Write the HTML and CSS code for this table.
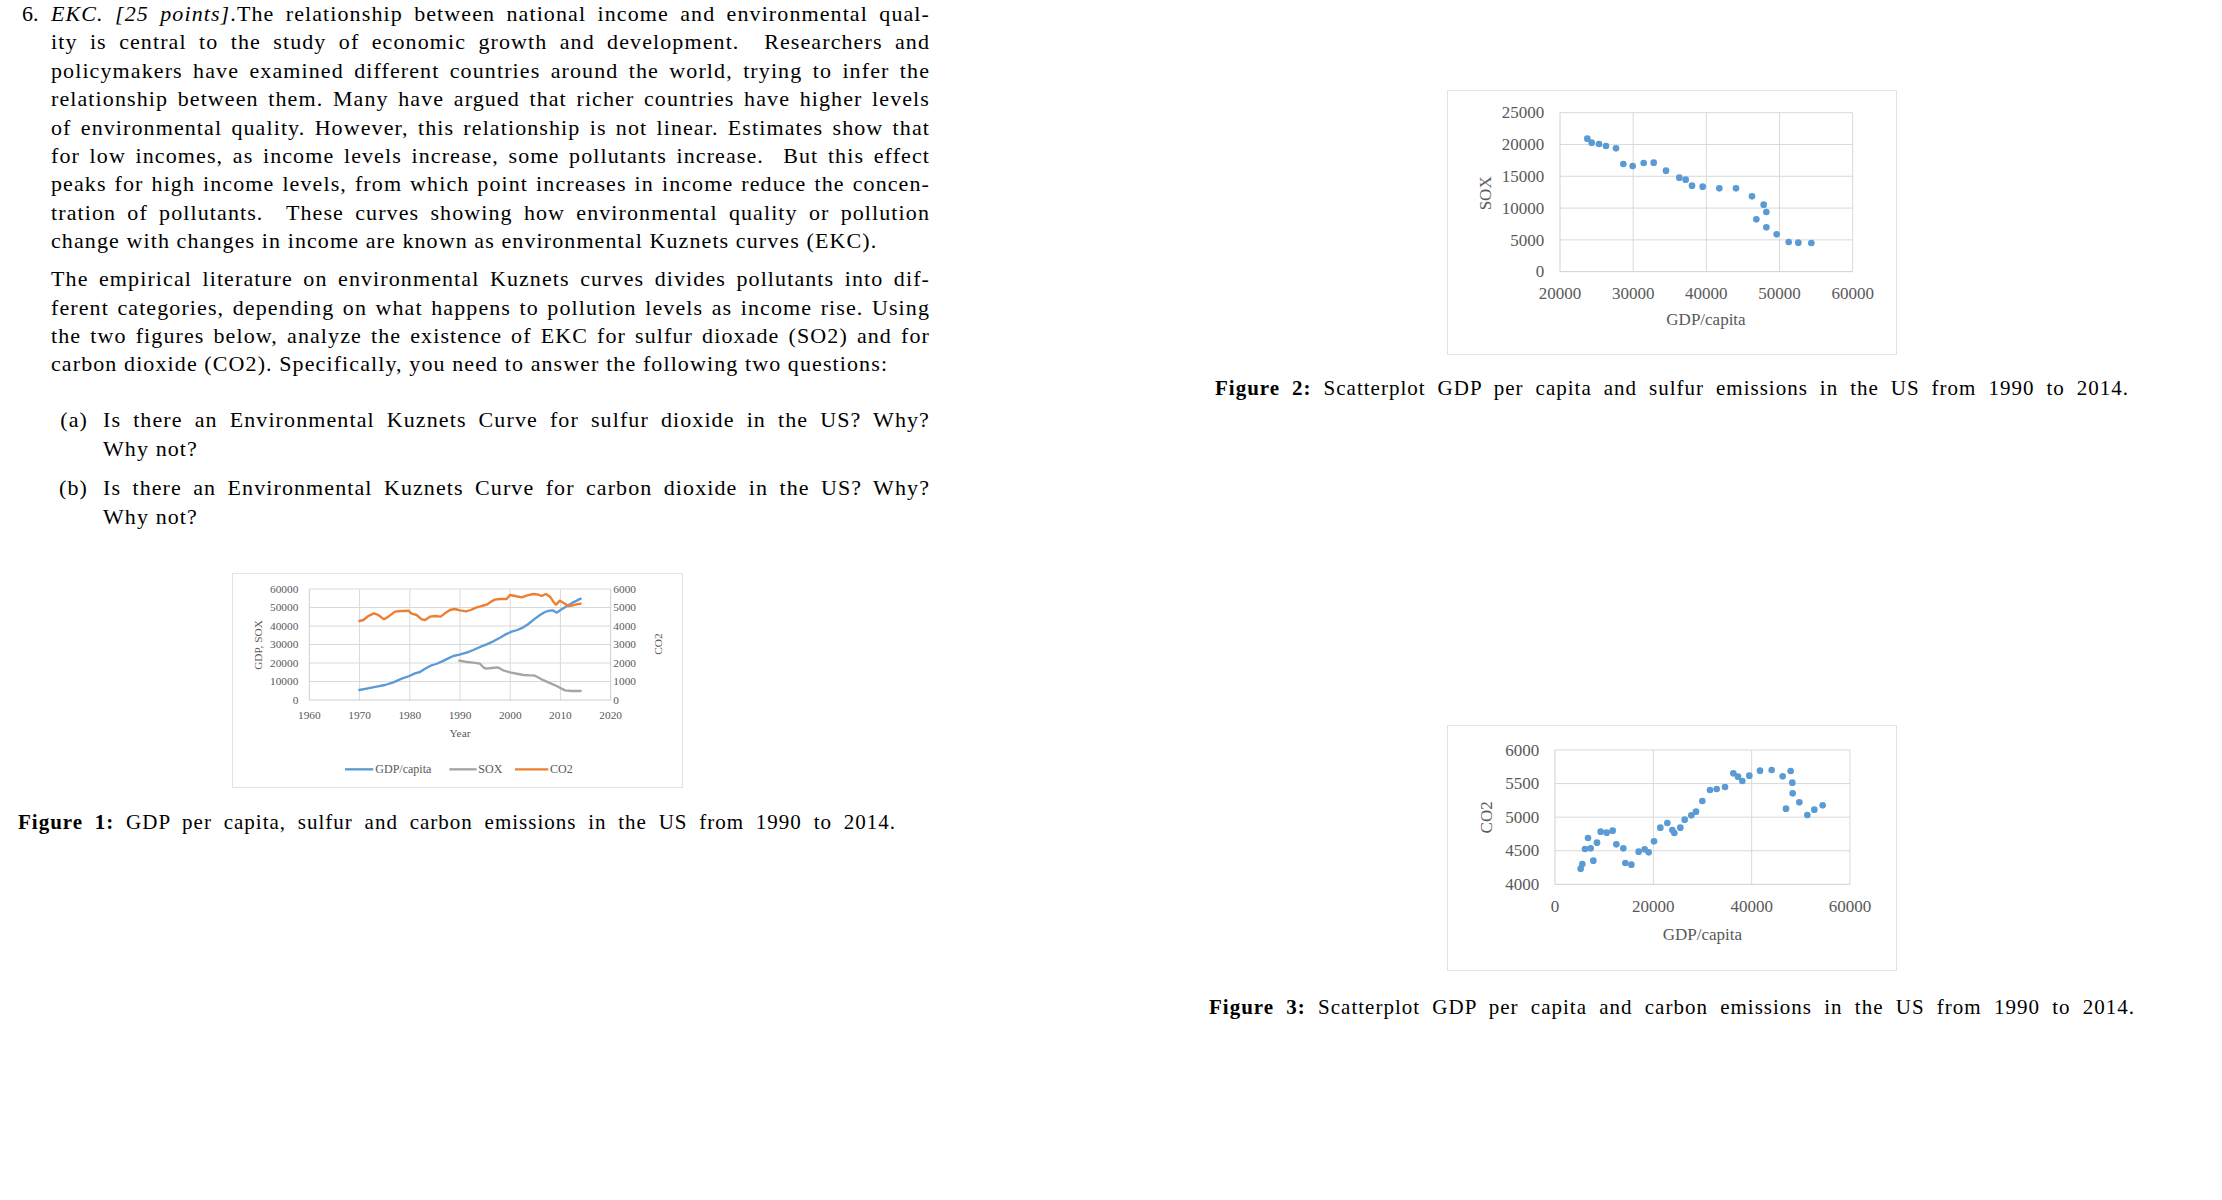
FILE: index.html
```html
<!DOCTYPE html>
<html lang="en">
<head>
<meta charset="utf-8">
<title>EKC question</title>
<link rel="stylesheet" href="styles.css">
</head>
<body>
<div class="page">
  <div class="left">
    <div class="question">
      <span class="qnum">6.</span>
      <div class="qbody">
        <p class="text para">
          <span class="ln"><i>EKC. [25 points]</i>.The relationship between national income and environmental qual-</span>
          <span class="ln">ity is central to the study of economic growth and development. &nbsp;Researchers and</span>
          <span class="ln">policymakers have examined different countries around the world, trying to infer the</span>
          <span class="ln">relationship between them. Many have argued that richer countries have higher levels</span>
          <span class="ln">of environmental quality. However, this relationship is not linear. Estimates show that</span>
          <span class="ln">for low incomes, as income levels increase, some pollutants increase. &nbsp;But this effect</span>
          <span class="ln">peaks for high income levels, from which point increases in income reduce the concen-</span>
          <span class="ln">tration of pollutants. &nbsp;These curves showing how environmental quality or pollution</span>
          <span class="ln last">change with changes in income are known as environmental Kuznets curves (EKC).</span>
        </p>
        <p class="text para para2">
          <span class="ln">The empirical literature on environmental Kuznets curves divides pollutants into dif-</span>
          <span class="ln">ferent categories, depending on what happens to pollution levels as income rise. Using</span>
          <span class="ln">the two figures below, analyze the existence of EKC for sulfur dioxade (SO2) and for</span>
          <span class="ln last">carbon dioxide (CO2). Specifically, you need to answer the following two questions:</span>
        </p>
        <ol class="items text">
          <li><span class="lbl">(a)</span><span class="itext"><span class="ln">Is there an Environmental Kuznets Curve for sulfur dioxide in the US? Why?</span><span class="ln last">Why not?</span></span></li>
          <li><span class="lbl">(b)</span><span class="itext"><span class="ln">Is there an Environmental Kuznets Curve for carbon dioxide in the US? Why?</span><span class="ln last">Why not?</span></span></li>
        </ol>
      </div>
    </div>

    <div class="chartbox fig1">
      <svg class="chart" width="449" height="213" viewBox="39 12 1347 639">
        <g class="grid">
          <line x1="268" y1="57" x2="1172" y2="57"/>
          <line x1="268" y1="112.5" x2="1172" y2="112.5"/>
          <line x1="268" y1="168" x2="1172" y2="168"/>
          <line x1="268" y1="223.5" x2="1172" y2="223.5"/>
          <line x1="268" y1="279" x2="1172" y2="279"/>
          <line x1="268" y1="334.5" x2="1172" y2="334.5"/>
          <line x1="418.7" y1="57" x2="418.7" y2="390"/>
          <line x1="569.3" y1="57" x2="569.3" y2="390"/>
          <line x1="720" y1="57" x2="720" y2="390"/>
          <line x1="870.7" y1="57" x2="870.7" y2="390"/>
          <line x1="1021.3" y1="57" x2="1021.3" y2="390"/>
        </g>
        <g class="axis">
          <line x1="268" y1="57" x2="268" y2="390"/>
          <line x1="1172" y1="57" x2="1172" y2="390"/>
          <line x1="268" y1="390" x2="1172" y2="390"/>
        </g>
        <g class="lbl1 end">
          <text x="235" y="68">60000</text>
          <text x="235" y="123.5">50000</text>
          <text x="235" y="179">40000</text>
          <text x="235" y="234.5">30000</text>
          <text x="235" y="290">20000</text>
          <text x="235" y="345.5">10000</text>
          <text x="235" y="401">0</text>
        </g>
        <g class="lbl1">
          <text x="1180" y="68">6000</text>
          <text x="1180" y="123.5">5000</text>
          <text x="1180" y="179">4000</text>
          <text x="1180" y="234.5">3000</text>
          <text x="1180" y="290">2000</text>
          <text x="1180" y="345.5">1000</text>
          <text x="1180" y="401">0</text>
        </g>
        <g class="lbl1 mid">
          <text x="268" y="448">1960</text>
          <text x="418.7" y="448">1970</text>
          <text x="569.3" y="448">1980</text>
          <text x="720" y="448">1990</text>
          <text x="870.7" y="448">2000</text>
          <text x="1021.3" y="448">2010</text>
          <text x="1172" y="448">2020</text>
          <text x="720" y="501">Year</text>
          <text x="125" y="225" transform="rotate(-90 125 225)">GDP, SOX</text>
          <text x="1327" y="222" transform="rotate(-90 1327 222)">CO2</text>
        </g>
        <polyline class="s-gdp" points="418,360 440,356 470,350 495,345 520,337 545,326 568,318 585,310 600,306 615,296 632,287 648,282 665,275 683,266 700,258 718,254 740,248 760,240 780,231 800,223 820,214 840,203 855,194 875,185 892,180 910,172 925,162 945,146 960,135 975,126 988,122 998,121 1010,128 1025,118 1045,106 1060,97 1082,86"/>
        <polyline class="s-sox" points="718,272 740,276 760,278 780,281 790,292 798,296 815,294 833,292 852,302 873,308 895,312 910,315 930,316 945,317 965,328 985,337 1010,348 1025,356 1035,361 1055,363 1082,363"/>
        <polyline class="s-co2" points="418,153 430,150 445,138 462,130 475,135 492,148 505,140 525,125 545,123 555,123 565,122 575,131 590,135 605,148 615,150 630,140 645,138 662,140 675,130 690,120 705,117 720,121 738,124 752,120 768,113 785,108 800,104 813,95 825,89 840,87 860,87 870,75 885,78 905,82 922,76 940,72 955,74 965,78 978,72 990,80 1000,95 1008,104 1020,92 1032,100 1045,108 1055,107 1070,103 1082,101"/>
        <g class="legend">
          <line class="s-gdp" x1="375" y1="598" x2="460" y2="598"/>
          <text x="466" y="610">GDP/capita</text>
          <line class="s-sox" x1="688" y1="598" x2="770" y2="598"/>
          <text x="775" y="610">SOX</text>
          <line class="s-co2" x1="885" y1="598" x2="985" y2="598"/>
          <text x="990" y="610">CO2</text>
        </g>
      </svg>
    </div>
    <p class="cap cap1"><b>Figure 1:</b> GDP per capita, sulfur and carbon emissions in the US from 1990 to 2014.</p>
  </div>

  <div class="right">
    <div class="chartbox fig2">
      <svg class="chart" width="448" height="263" viewBox="-6 33 1344 789">
        <g class="grid">
          <line x1="330" y1="98" x2="1208" y2="98"/>
          <line x1="330" y1="193.4" x2="1208" y2="193.4"/>
          <line x1="330" y1="288.8" x2="1208" y2="288.8"/>
          <line x1="330" y1="384.2" x2="1208" y2="384.2"/>
          <line x1="330" y1="479.6" x2="1208" y2="479.6"/>
          <line x1="549.5" y1="98" x2="549.5" y2="575"/>
          <line x1="769" y1="98" x2="769" y2="575"/>
          <line x1="988.5" y1="98" x2="988.5" y2="575"/>
          <line x1="1208" y1="98" x2="1208" y2="575"/>
        </g>
        <g class="axis">
          <line x1="330" y1="98" x2="330" y2="575"/>
          <line x1="330" y1="575" x2="1208" y2="575"/>
        </g>
        <g class="lbl2 end">
          <text x="283" y="115">25000</text>
          <text x="283" y="210.4">20000</text>
          <text x="283" y="305.8">15000</text>
          <text x="283" y="401.2">10000</text>
          <text x="283" y="496.6">5000</text>
          <text x="283" y="592">0</text>
        </g>
        <g class="lbl2 mid">
          <text x="330" y="657">20000</text>
          <text x="549.5" y="657">30000</text>
          <text x="769" y="657">40000</text>
          <text x="988.5" y="657">50000</text>
          <text x="1208" y="657">60000</text>
          <text x="768" y="735">GDP/capita</text>
          <text x="124" y="340" transform="rotate(-90 124 340)">SOX</text>
        </g>
        <g class="pts">
          <circle cx="412" cy="176" r="10"/><circle cx="425" cy="188" r="10"/><circle cx="447" cy="192" r="10"/>
          <circle cx="468" cy="198" r="10"/><circle cx="498" cy="205" r="10"/><circle cx="520" cy="252" r="10"/>
          <circle cx="548" cy="258" r="10"/><circle cx="581" cy="249" r="10"/><circle cx="611" cy="248" r="10"/>
          <circle cx="648" cy="272" r="10"/><circle cx="688" cy="293" r="10"/><circle cx="707" cy="299" r="10"/>
          <circle cx="726" cy="317" r="10"/><circle cx="758" cy="320" r="10"/><circle cx="808" cy="325" r="10"/>
          <circle cx="858" cy="325" r="10"/><circle cx="906" cy="349" r="10"/><circle cx="941" cy="374" r="10"/>
          <circle cx="949" cy="396" r="10"/><circle cx="919" cy="418" r="10"/><circle cx="949" cy="442" r="10"/>
          <circle cx="980" cy="463" r="10"/><circle cx="1016" cy="486" r="10"/><circle cx="1045" cy="488" r="10"/>
          <circle cx="1084" cy="489" r="10"/>
        </g>
      </svg>
    </div>
    <p class="cap cap2"><b>Figure 2:</b> Scatterplot GDP per capita and sulfur emissions in the US from 1990 to 2014.</p>

    <div class="chartbox fig3">
      <svg class="chart" width="448" height="244" viewBox="-6 18 1344 732">
        <g class="grid">
          <line x1="315" y1="90" x2="1200" y2="90"/>
          <line x1="315" y1="190.75" x2="1200" y2="190.75"/>
          <line x1="315" y1="291.5" x2="1200" y2="291.5"/>
          <line x1="315" y1="392.25" x2="1200" y2="392.25"/>
          <line x1="610" y1="90" x2="610" y2="493"/>
          <line x1="905" y1="90" x2="905" y2="493"/>
          <line x1="1200" y1="90" x2="1200" y2="493"/>
        </g>
        <g class="axis">
          <line x1="315" y1="90" x2="315" y2="493"/>
          <line x1="315" y1="493" x2="1200" y2="493"/>
        </g>
        <g class="lbl2 end">
          <text x="268" y="107">6000</text>
          <text x="268" y="207.75">5500</text>
          <text x="268" y="308.5">5000</text>
          <text x="268" y="409.25">4500</text>
          <text x="268" y="510">4000</text>
        </g>
        <g class="lbl2 mid">
          <text x="315" y="577">0</text>
          <text x="610" y="577">20000</text>
          <text x="905" y="577">40000</text>
          <text x="1200" y="577">60000</text>
          <text x="757" y="660">GDP/capita</text>
          <text x="127" y="292" transform="rotate(-90 127 292)">CO2</text>
        </g>
        <g class="pts">
          <circle cx="392" cy="446" r="10"/><circle cx="397" cy="432" r="10"/><circle cx="405" cy="387" r="10"/>
          <circle cx="414" cy="354" r="10"/><circle cx="422" cy="385" r="10"/><circle cx="430" cy="422" r="10"/>
          <circle cx="441" cy="368" r="10"/><circle cx="452" cy="335" r="10"/><circle cx="470" cy="338" r="10"/>
          <circle cx="488" cy="332" r="10"/><circle cx="499" cy="373" r="10"/><circle cx="520" cy="385" r="10"/>
          <circle cx="526" cy="429" r="10"/><circle cx="544" cy="434" r="10"/><circle cx="566" cy="395" r="10"/>
          <circle cx="584" cy="388" r="10"/><circle cx="596" cy="397" r="10"/><circle cx="612" cy="364" r="10"/>
          <circle cx="631" cy="323" r="10"/><circle cx="652" cy="309" r="10"/><circle cx="667" cy="330" r="10"/>
          <circle cx="673" cy="339" r="10"/><circle cx="691" cy="323" r="10"/><circle cx="704" cy="299" r="10"/>
          <circle cx="724" cy="286" r="10"/><circle cx="738" cy="275" r="10"/><circle cx="757" cy="243" r="10"/>
          <circle cx="780" cy="210" r="10"/><circle cx="800" cy="207" r="10"/><circle cx="825" cy="201" r="10"/>
          <circle cx="850" cy="160" r="10"/><circle cx="864" cy="170" r="10"/><circle cx="877" cy="183" r="10"/>
          <circle cx="898" cy="167" r="10"/><circle cx="930" cy="152" r="10"/><circle cx="965" cy="150" r="10"/>
          <circle cx="998" cy="169" r="10"/><circle cx="1008" cy="266" r="10"/><circle cx="1022" cy="153" r="10"/>
          <circle cx="1027" cy="188" r="10"/><circle cx="1028" cy="220" r="10"/><circle cx="1048" cy="247" r="10"/>
          <circle cx="1072" cy="285" r="10"/><circle cx="1093" cy="269" r="10"/><circle cx="1118" cy="256" r="10"/>
        </g>
      </svg>
    </div>
    <p class="cap cap3"><b>Figure 3:</b> Scatterplot GDP per capita and carbon emissions in the US from 1990 to 2014.</p>
  </div>
</div>
</body>
</html>
```

FILE: styles.css
```css
* {
  box-sizing: border-box;
}

html, body {
  margin: 0;
  padding: 0;
  background: #ffffff;
}

body {
  font-family: "Liberation Serif", "Times New Roman", serif;
  color: #000000;
}

.page {
  display: flex;
  width: 2222px;
  height: 1200px;
  overflow: hidden;
}

/* ---------- left column: question text ---------- */
.left {
  flex: none;
  width: 930px;
  padding-left: 22px;
}

.question {
  display: flex;
}

.qnum {
  flex: none;
  width: 29px;
  font-size: 22px;
  line-height: 28.4px;
}

.qbody {
  width: 879px;
}

.text {
  font-size: 22px;
  line-height: 28.4px;
  letter-spacing: 1.1px;
}

.para {
  margin: 0;
}

.para2 {
  margin-top: 9.5px;
}

.ln {
  display: block;
  text-align: justify;
  text-align-last: justify;
}

.ln.last {
  text-align-last: left;
}

.items {
  list-style: none;
  margin: 27.7px 0 0;
  padding: 0;
}

.items li {
  display: flex;
}

.items li + li {
  margin-top: 11.2px;
}

.lbl {
  flex: none;
  width: 52px;
  padding-right: 15px;
  text-align: right;
}

.itext {
  flex: 1;
  display: block;
}

/* ---------- chart boxes ---------- */
.chartbox {
  flex: none;
  background: #ffffff;
  border: 1px solid #e2e2e2;
}

.chart {
  display: block;
}

.fig1 {
  width: 451px;
  height: 215px;
  margin: 41.8px 0 0 210px;
}

.grid line {
  stroke: #d9d9d9;
  stroke-width: 3;
}

.axis line {
  stroke: #cfcfcf;
  stroke-width: 3;
}

.chart text {
  font-family: "Liberation Serif", "Times New Roman", serif;
  fill: #595959;
}

.lbl1 text {
  font-size: 34px;
}

.lbl2 text {
  font-size: 51px;
}

.end text {
  text-anchor: end;
}

.mid text {
  text-anchor: middle;
}

.legend text {
  font-size: 36px;
}

.s-gdp, .s-sox, .s-co2 {
  fill: none;
  stroke-width: 7;
  stroke-linejoin: round;
  stroke-linecap: round;
}

.legend line {
  stroke-linecap: butt;
}

.s-gdp { stroke: #5b9bd5; }
.s-sox { stroke: #a5a5a5; }
.s-co2 { stroke: #ed7d31; }

.pts circle {
  fill: #5b9bd5;
}

/* ---------- captions ---------- */
.cap {
  flex: none;
  margin: 0;
  font-size: 21px;
  line-height: 28.4px;
  letter-spacing: 1px;
  text-align: justify;
  text-align-last: justify;
}

.cap1 {
  width: 878px;
  margin: 19.7px 0 0 -4px;
}

/* ---------- right column: scatter plots ---------- */
.right {
  flex: none;
  display: flex;
  flex-direction: column;
  align-items: center;
  width: 940px;
  margin-left: 272px;
  padding-top: 90px;
}

.fig2 {
  width: 450px;
  height: 265px;
}

.cap2 {
  width: 914px;
  margin-top: 18.7px;
}

.fig3 {
  width: 450px;
  height: 246px;
  margin-top: 322.7px;
}

.cap3 {
  width: 926px;
  margin-top: 22.6px;
}
```
